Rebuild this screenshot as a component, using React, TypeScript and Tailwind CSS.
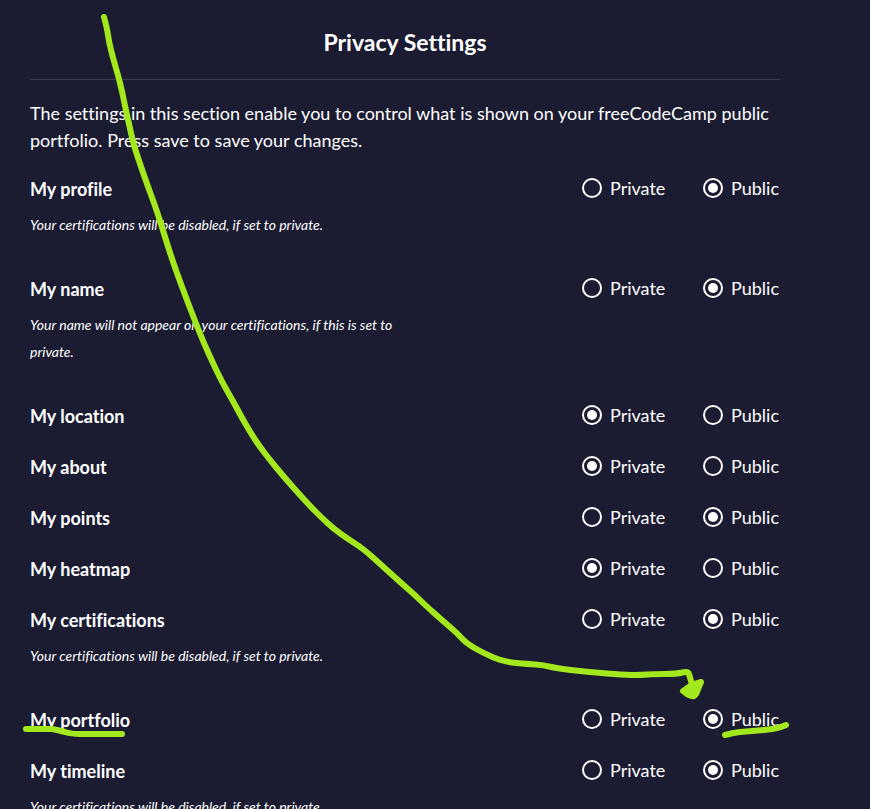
type Visibility = "private" | "public";
type Point = [number, number];

interface Setting {
  id: string;
  label: string;
  value: Visibility;
  note?: string;
}

const settings: Setting[] = [
  { id: "profile", label: "My profile", value: "public", note: "Your certifications will be disabled, if set to private." },
  { id: "name", label: "My name", value: "public", note: "Your name will not appear on your certifications, if this is set to private." },
  { id: "location", label: "My location", value: "private" },
  { id: "about", label: "My about", value: "private" },
  { id: "points", label: "My points", value: "public" },
  { id: "heatmap", label: "My heatmap", value: "private" },
  { id: "certifications", label: "My certifications", value: "public", note: "Your certifications will be disabled, if set to private." },
  { id: "portfolio", label: "My portfolio", value: "public" },
  { id: "timeline", label: "My timeline", value: "public", note: "Your certifications will be disabled, if set to private." },
];

const radioClass =
  "size-5 shrink-0 appearance-none rounded-full border-2 border-white bg-clip-content p-[3px] checked:bg-white";

function Row({ id, label, value, note }: Setting) {
  return (
    <fieldset aria-labelledby={`${id}-label`} className="mb-[23px] flex items-start justify-between">
      <div className="w-1/2 pr-2">
        <h3 id={`${id}-label`} className="text-lg leading-7 font-bold">
          {label}
        </h3>
        {note && <p className="mt-2 mb-[14px] text-sm leading-[27px] italic">{note}</p>}
      </div>
      <div className="grid grid-cols-[85px_77px] gap-9">
        <label className="flex items-center gap-2 text-lg leading-[26px]">
          <input type="radio" name={id} value="private" defaultChecked={value === "private"} className={radioClass} />
          Private
        </label>
        <label className="flex items-center gap-2 text-lg leading-[26px]">
          <input type="radio" name={id} value="public" defaultChecked={value === "public"} className={radioClass} />
          Public
        </label>
      </div>
    </fieldset>
  );
}

const arrow: Point[] = [
  [104, 17], [107, 28], [109, 42], [113, 58], [118, 75], [122, 91], [125, 106], [129, 124], [133, 142], [138, 158],
  [147, 184], [157, 211], [165, 237], [173, 262], [182, 287], [195, 321], [203, 341], [212, 361], [222, 382],
  [233, 401], [242, 418], [252, 435], [260, 447], [270, 460], [284, 477], [300, 495], [311, 507], [322, 518],
  [334, 529], [348, 539], [359, 546], [368, 553], [378, 562], [400, 582], [415, 595], [425, 605], [443, 621],
  [457, 633], [466, 643], [483, 653], [504, 662], [528, 664], [543, 665], [560, 669], [600, 673], [628, 675],
  [642, 675], [653, 674], [677, 674], [688, 671], [690, 677], [692, 685],
];

// Rounds the corners of a freehand stroke by curving between midpoints
function smooth(points: Point[]) {
  const [start, ...rest] = points;
  const end = rest[rest.length - 1];
  const curves = rest.slice(0, -1).map(([x, y], i) => {
    const [nx, ny] = rest[i + 1];
    return `Q${x} ${y} ${(x + nx) / 2} ${(y + ny) / 2}`;
  });
  return `M${start[0]} ${start[1]} ${curves.join(" ")} L${end[0]} ${end[1]}`;
}

function Annotation() {
  return (
    <svg
      className="pointer-events-none absolute top-0 left-0"
      width="870"
      height="809"
      viewBox="0 0 870 809"
      fill="none"
      stroke="#a3e81c"
      strokeWidth="6"
      strokeLinecap="round"
      strokeLinejoin="round"
      aria-hidden="true"
    >
      <path d={smooth(arrow)} />
      <path fill="#a3e81c" d="M683 691 Q692 684 701 682 L698 689 Q697 694 694 696 Q690 697 683 691 Z" />
      <path d="M26 729 L52 729 Q58 730 65 732 Q71 734 80 734 L122 734" />
      <path d="M725 735 Q732 733 740 732 L764 730 Q777 729 786 725" />
    </svg>
  );
}

export default function App() {
  return (
    <main className="relative h-screen overflow-hidden bg-[#1b1b32] font-['Lato',sans-serif] text-white [font-variant-ligatures:none]">
      <section className="mr-[90px] ml-[30px]">
        <h2 className="pt-[26px] text-center text-[23px] leading-[33px] font-bold">Privacy Settings</h2>
        <hr className="my-5 border-[#3b3b4f]" />
        <p className="mb-[21px] text-lg leading-[27px]">
          The settings in this section enable you to control what is shown on your freeCodeCamp public portfolio. Press
          save to save your changes.
        </p>
        <form>
          {settings.map((setting) => (
            <Row key={setting.id} {...setting} />
          ))}
        </form>
      </section>
      <Annotation />
    </main>
  );
}
